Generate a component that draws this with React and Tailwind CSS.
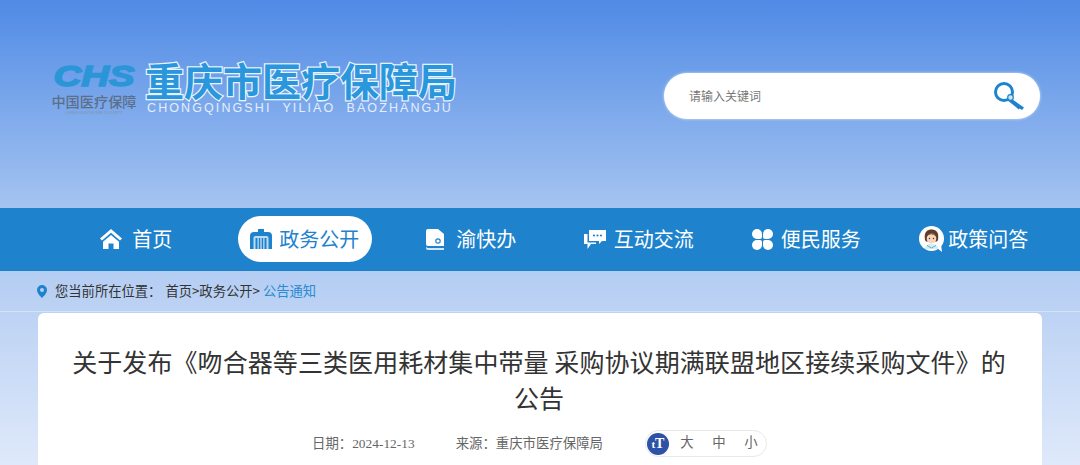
const SERIF = "font-['Liberation_Serif','Noto_Sans_CJK_SC',serif]";

function HomeIcon() {
  return (
    <svg width="22" height="20" viewBox="0 0 22 20" fill="#fff">
      <path d="M11 0 L22 9.5 L20 11.5 L11 3.8 L2 11.5 L0 9.5 Z" />
      <path d="M11 6 L19 12.8 V20 H13.5 V14.5 H8.5 V20 H3 V12.8 Z" />
    </svg>
  );
}

function GovIcon() {
  return (
    <svg width="22" height="20" viewBox="0 0 22 20">
      <path d="M8 0 H14 V3 H8 Z" fill="#1e83cc" />
      <path d="M0 20 V7 Q0 3 4 3 H18 Q22 3 22 7 V20 Z" fill="#1e83cc" />
      <path d="M3.5 20 V9 Q3.5 7 5.5 7 H16.5 Q18.5 7 18.5 9 V20 Z" fill="#bcdcf2" />
      <path d="M5.5 9 H7.5 V20 H5.5 Z M8.8 9 H10.3 V20 H8.8 Z M11.7 9 H13.2 V20 H11.7 Z M14.5 9 H16.5 V20 H14.5 Z" fill="#1e83cc" />
    </svg>
  );
}

function DocIcon() {
  return (
    <svg width="18" height="21" viewBox="0 0 18 21">
      <path d="M2 0 H12 L18 5 V17 H2 A2 2 0 0 1 0 15 V2 A2 2 0 0 1 2 0 Z" fill="#fff" />
      <path d="M0 17 A2 2 0 0 0 2 19 H18 V21 H2 A2 2 0 0 1 0 19 Z" fill="#d3e6f5" />
      <circle cx="12" cy="12" r="2.2" fill="none" stroke="#1e83cc" strokeWidth="1.2" />
    </svg>
  );
}

function ChatIcon() {
  return (
    <svg width="22" height="19" viewBox="0 0 22 19" fill="#fff">
      <path d="M5 0 H22 V11 H18 L15 14 V11 H5 Z" />
      <path d="M0 4 H3.5 V12.5 H12 V14 H7 L3.5 19 V14 H0 Z" />
      <circle cx="10" cy="5.5" r="1.1" fill="#1e83cc" />
      <circle cx="13.5" cy="5.5" r="1.1" fill="#1e83cc" />
      <circle cx="17" cy="5.5" r="1.1" fill="#1e83cc" />
    </svg>
  );
}

function GridIcon() {
  return (
    <svg width="21" height="21" viewBox="0 0 21 21" fill="#fff">
      <path d="M5 0 A5 5 0 0 1 10 5 V8 A2 2 0 0 1 8 10 H5 A5 5 0 0 1 5 0 Z" />
      <path d="M16 0 A5 5 0 0 1 16 10 H13 A2 2 0 0 1 11 8 V5 A5 5 0 0 1 16 0 Z" />
      <path d="M5 11 H8 A2 2 0 0 1 10 13 V16 A5 5 0 0 1 0 16 A5 5 0 0 1 5 11 Z" />
      <path d="M13 11 H16 A5 5 0 0 1 16 21 A5 5 0 0 1 11 16 V13 A2 2 0 0 1 13 11 Z" />
    </svg>
  );
}

function AvatarIcon() {
  return (
    <svg width="25" height="26" viewBox="0 0 25 26">
      <circle cx="12.5" cy="12.5" r="12.5" fill="#fff" />
      <path d="M18 22 L23 26 L22 18 Z" fill="#fff" />
      <path d="M6 14 C4.5 5 9 3.5 12.5 3.5 C16 3.5 20.5 5 19 14 L18 15.5 H7 Z" fill="#5f3d28" />
      <ellipse cx="12.5" cy="12.5" rx="4.8" ry="5" fill="#f6d5bb" />
      <path d="M7.5 11 C9 8 14 7 17.5 11 C16 7 9 6 7.5 11 Z" fill="#5f3d28" />
      <circle cx="10.5" cy="12.5" r="0.7" fill="#333" />
      <circle cx="14.5" cy="12.5" r="0.7" fill="#333" />
      <path d="M6 23 C6 19 9 18 12.5 18 C16 18 19 19 19 23 Z" fill="#d9edf5" />
      <path d="M8 19.5 L12.5 22 L17 19.5" fill="none" stroke="#5eb0c8" strokeWidth="1" />
    </svg>
  );
}

function SearchKeyIcon() {
  return (
    <svg width="31" height="29" viewBox="0 0 31 29">
      <circle cx="10" cy="10" r="8.5" fill="none" stroke="#1e83cc" strokeWidth="3" />
      <path d="M15 15 L30 25.5 L28 28 L25.5 26.5 L24.5 27.5 L22.5 25.5 L13 18 Z" fill="#1e83cc" />
      <circle cx="16.5" cy="15.5" r="2.8" fill="#cfe6f6" stroke="#1e83cc" strokeWidth="1.2" />
    </svg>
  );
}

function PinIcon() {
  return (
    <svg width="10" height="13" viewBox="0 0 10 13">
      <path
        fillRule="evenodd"
        d="M5 0 A5 5 0 0 1 10 5 C10 8 7 11 5 13 C3 11 0 8 0 5 A5 5 0 0 1 5 0 Z M5 3 A2 2 0 1 0 5 7 A2 2 0 1 0 5 3 Z"
        fill="#1e83cc"
      />
    </svg>
  );
}

const navItems = [
  { label: "首页", icon: <HomeIcon />, gap: "gap-[10px]" },
  { label: "政务公开", icon: <GovIcon />, gap: "gap-[7px] ml-[2px]", active: true },
  { label: "渝快办", icon: <DocIcon />, gap: "gap-3" },
  { label: "互动交流", icon: <ChatIcon />, gap: "gap-2" },
  { label: "便民服务", icon: <GridIcon />, gap: "gap-2" },
  { label: "政策问答", icon: <AvatarIcon />, gap: "gap-1" },
];

export default function App() {
  return (
    <div className="h-[465px] overflow-hidden bg-gradient-to-b from-[#4f8ae5] via-[#a6c4f0] via-45% to-[#dfe9fa] font-['Noto_Sans_CJK_SC',sans-serif]">
      {/* header */}
      <header className="h-[208px] flex items-start justify-between pl-[50px] pr-[40px]">
        <div className="flex items-start pt-[58px]">
          <div className="w-[88px] flex flex-col items-center pt-[6px]">
            <div className="h-[24px] w-[86px] flex items-center justify-center italic font-black text-[#2a96d8] text-[30px] leading-none font-['Liberation_Sans',sans-serif] scale-x-[1.28] [-webkit-text-stroke:1.5px_#2a96d8]">
              CHS
            </div>
            <div className="mt-[4px] text-[14.2px] leading-[18px] font-medium text-[#5b6f8a] whitespace-nowrap">
              中国医疗保障
            </div>
            <div className="text-[4px] leading-[4px] text-[#7f93ad] whitespace-nowrap">
              CHINA HEALTHCARE SECURITY
            </div>
          </div>
          <div className="ml-[7px]">
            <div className="text-[39px] leading-[42px] font-bold text-[#2a96dc] whitespace-nowrap [-webkit-text-stroke:2.5px_#e9f3fd] [paint-order:stroke_fill]">
              重庆市医疗保障局
            </div>
            <div className="ml-[2px] text-[12.5px] leading-[16px] text-[#e3eefc] tracking-[2.1px] whitespace-pre font-['Liberation_Sans',sans-serif]">
              {"CHONGQINGSHI  YILIAO  BAOZHANGJU"}
            </div>
          </div>
        </div>
        <div className="mt-[73px] w-[376px] h-[46px] rounded-full bg-white shadow-[0_0_3px_rgba(255,255,255,0.7)] flex items-center justify-between pl-[25px] pr-[15px]">
          <span className="text-[12px] text-[#777777]">请输入关键词</span>
          <SearchKeyIcon />
        </div>
      </header>

      {/* nav */}
      <nav className="h-[63px] pb-[1px] bg-[#1e83cc] flex items-center pl-[52.5px]">
        {navItems.map((item) => (
          <div key={item.label} className="w-[167.5px] flex justify-center">
            <div
              className={`h-[46px] flex items-center justify-center whitespace-nowrap text-[20px] ${item.gap} ${
                item.active ? "w-[134px] rounded-full bg-white text-[#1e83cc]" : "text-white"
              }`}
            >
              {item.icon}
              <span>{item.label}</span>
            </div>
          </div>
        ))}
      </nav>

      {/* breadcrumb */}
      <div className="h-[41px] pl-[37px] flex items-center gap-[8px] text-[13.3px] text-[#333333] border-b border-[#d5e3f8]">
        <PinIcon />
        <span className="whitespace-nowrap">您当前所在位置：</span>
        <span className="-ml-[4px] whitespace-nowrap">
          首页&gt;政务公开&gt; <span className="text-[#2a8ad2]">公告通知</span>
        </span>
      </div>

      {/* article card */}
      <main className="mx-[38px] mt-[1px] h-[200px] bg-white rounded-t-[6px] pl-[30px] pr-[32px] pt-[30px]">
        <h1 className="text-[25px] leading-[36px] text-center text-[#333333] font-normal tracking-[0.08px]">
          关于发布《吻合器等三类医用耗材集中带量 采购协议期满联盟地区接续采购文件》的公告
        </h1>
        <div className={`mt-[15px] ml-[244px] flex items-center whitespace-nowrap text-[13.4px] text-[#666666] ${SERIF}`}>
          <span className="pt-[2px]">日期：2024-12-13</span>
          <span className="ml-[41px] pt-[2px]">来源：重庆市医疗保障局</span>
          <div className="ml-[42px] w-[122px] h-[27px] rounded-full border border-[#e8e8e8] flex items-center pl-[1px]">
            <span className="w-[22px] h-[22px] rounded-full bg-[#2d52a8] text-white font-bold leading-none flex items-baseline justify-center pt-[4px] font-['Liberation_Serif',serif]">
              <span className="text-[11px]">t</span>
              <span className="text-[14px]">T</span>
            </span>
            <span className="ml-[11px] w-[14px] text-center">大</span>
            <span className="ml-[18px] w-[14px] text-center">中</span>
            <span className="ml-[18px] w-[14px] text-center">小</span>
          </div>
        </div>
      </main>
    </div>
  );
}
